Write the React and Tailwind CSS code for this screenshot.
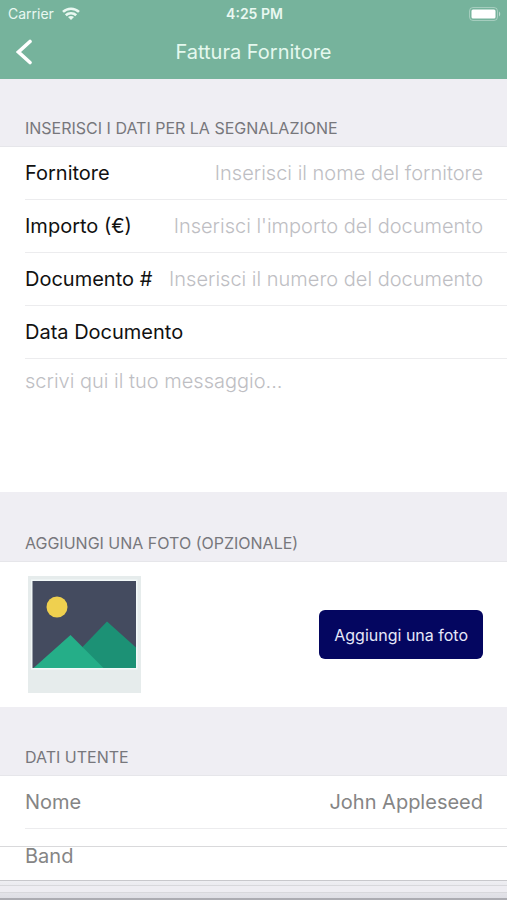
import React, { useState } from "react";

const SectionHeader = ({ title, className = "h-[70px]" }) => (
  <div className={`flex items-end bg-[#efeef3] border-b border-[#e6e6ea] px-[25px] pb-2 ${className}`}>
    <h2 className="text-base leading-5 text-[#77777c] uppercase">{title}</h2>
  </div>
);

const Field = ({ id, label, placeholder, value, onChange, className = "border-b" }) => (
  <div className={`ml-[25px] pr-6 h-[53px] flex items-center gap-2 border-[#ececee] ${className}`}>
    <label htmlFor={id} className="shrink-0">
      {label}
    </label>
    <input
      id={id}
      type="text"
      value={value}
      onChange={(e) => onChange(e.target.value)}
      placeholder={placeholder}
      className="flex-1 min-w-0 bg-transparent text-right outline-none placeholder:font-light placeholder:text-[#bebec3]"
    />
  </div>
);

const WifiIcon = () => (
  <svg className="w-[18px] h-[13px]" viewBox="0 0 18 13" fill="none" stroke="currentColor" strokeWidth="2.6">
    <path d="M1 4.9C5.500 0.6 12.500 0.6 17 4.9" />
    <path d="M3.800 8.200C6.600 5.500 11.400 5.500 14.200 8.200" />
    <path d="M9 13L6 10.100C7.700 8.600 10.300 8.600 12 10.100Z" fill="currentColor" stroke="none" />
  </svg>
);

const BatteryIcon = () => (
  <svg className="w-8 h-[14px]" viewBox="0 0 32 14" fill="none">
    <rect x="0.500" y="0.500" width="28" height="13" rx="3.500" stroke="#fff" strokeOpacity="0.35" />
    <rect x="2.500" y="2.500" width="24" height="9" rx="1.500" fill="#fff" />
    <path d="M30 4.500C31.600 5.200 31.600 8.800 30 9.500Z" fill="#fff" fillOpacity="0.5" />
  </svg>
);

const PhotoPreview = () => (
  <svg className="w-[113px] h-[117px]" viewBox="0 0 113 117" role="img" aria-label="Foto">
    <rect width="113" height="117" fill="#e6ecec" />
    <rect x="3" y="3.500" width="106.500" height="90" fill="#f3f9f9" />
    <rect x="4.500" y="5" width="103.500" height="87" fill="#444b5f" />
    <circle cx="29" cy="31" r="10.500" fill="#efd04f" />
    <path d="M79 45.500L108 71.500V92H66L54.500 71Z" fill="#1c9175" />
    <path d="M42.500 59L75.500 92H5.500Z" fill="#25ae88" />
  </svg>
);

const App = () => {
  const [form, setForm] = useState({
    fornitore: "",
    importo: "",
    documento: "",
    data: "",
    messaggio: "",
    nome: "John Appleseed",
    band: "",
  });

  const update = (key) => (value) => setForm({ ...form, [key]: value });

  return (
    <div className="relative min-h-screen flex flex-col bg-white overflow-hidden font-['Inter','Liberation_Sans',sans-serif] text-xl text-[#111111]">
      <header className="h-[79px] bg-[#76b39c] text-white">
        <div className="h-[27px] pl-2 pr-[6px] grid grid-cols-3 items-center text-sm leading-4">
          <div className="flex items-center gap-2 text-[#e9f8f1]">
            <span>Carrier</span>
            <WifiIcon />
          </div>
          <span className="text-center font-semibold text-[#e9f8f1]">4:25 PM</span>
          <div className="flex justify-end">
            <BatteryIcon />
          </div>
        </div>
        <div className="h-[50px] px-4 grid grid-cols-[32px_1fr_32px] items-center">
          <button type="button" aria-label="Indietro" className="cursor-pointer">
            <svg className="w-4 h-[26px]" viewBox="0 0 16 26" fill="none" stroke="currentColor" strokeWidth="3.600" strokeLinecap="round">
              <path d="M14 2.500L2.500 13L14 23.500" />
            </svg>
          </button>
          <h1 className="text-center text-xl text-[#e4f8ee]">Fattura Fornitore</h1>
        </div>
      </header>

      <main>
        <SectionHeader title="Inserisci i dati per la segnalazione" className="h-[68px]" />
        <Field
          id="fornitore"
          label="Fornitore"
          placeholder="Inserisci il nome del fornitore"
          value={form.fornitore}
          onChange={update("fornitore")}
        />
        <Field
          id="importo"
          label="Importo (€)"
          placeholder="Inserisci l'importo del documento"
          value={form.importo}
          onChange={update("importo")}
        />
        <Field
          id="documento"
          label="Documento #"
          placeholder="Inserisci il numero del documento"
          value={form.documento}
          onChange={update("documento")}
        />
        <Field id="data" label="Data Documento" value={form.data} onChange={update("data")} />
        <textarea
          aria-label="Messaggio"
          value={form.messaggio}
          onChange={(e) => update("messaggio")(e.target.value)}
          placeholder="scrivi qui il tuo messaggio..."
          className="block w-full h-[133px] px-[25px] pt-2 resize-none outline-none placeholder:font-light placeholder:text-[#bebec3]"
        />

        <SectionHeader title="Aggiungi una foto (opzionale)" />
        <div className="h-[145px] pl-7 pr-6 flex items-center justify-between">
          <PhotoPreview />
          <button
            type="button"
            className="h-[49px] px-[15px] rounded-md bg-[#040660] text-base text-[#e6e8fa] cursor-pointer"
          >
            Aggiungi una foto
          </button>
        </div>

        <SectionHeader title="Dati utente" className="h-[69px]" />
        <div className="text-[#858585]">
          <Field id="nome" label="Nome" value={form.nome} onChange={update("nome")} />
          <Field id="band" label="Band" value={form.band} onChange={update("band")} className="border-b-0" />
        </div>
      </main>

      {/* toolbar edge that overlaps the last row */}
      <footer className="absolute inset-x-0 bottom-0 h-[54px] flex flex-col justify-end border-t border-[#d9d9db] pointer-events-none">
        <div className="h-5 border-t border-b-2 border-t-[#c8c8cc] border-b-[#acacb2] bg-linear-to-b from-[#efeff3] to-[#dedee4]">
          <div className="mt-1 h-2 border-y border-[#d8d8dc] bg-[#eeedf2]" />
        </div>
      </footer>
    </div>
  );
};

export default App;
